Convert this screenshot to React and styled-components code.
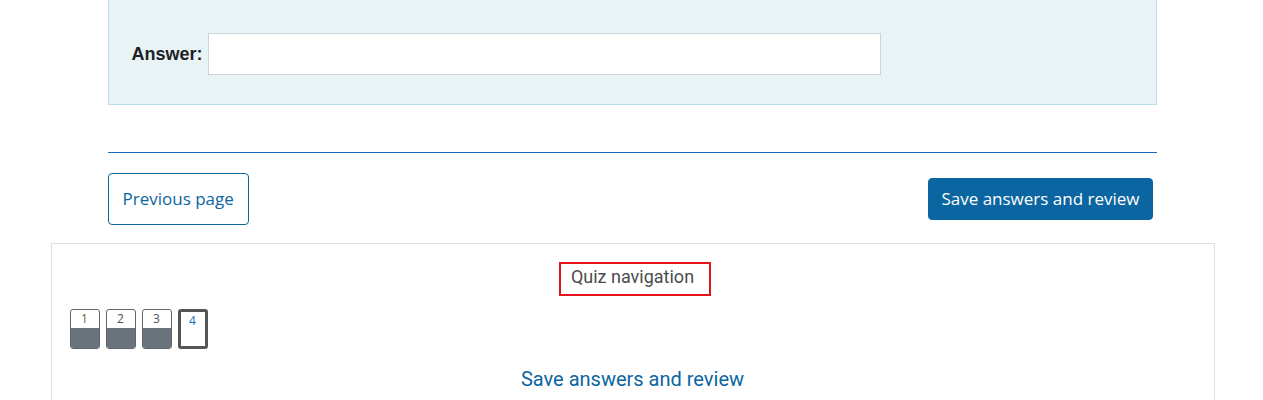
import React from 'react'
import styled, { createGlobalStyle } from 'styled-components'

const GlobalStyle = createGlobalStyle`
  body {
    margin: 0;
    background: #fff;
    font-family: Roboto, "Liberation Sans", sans-serif;
  }
`

const pages = [
  { num: 1, color: '#7a6337', answered: true },
  { num: 2, color: '#495057', answered: true },
  { num: 3, color: '#495057', answered: true },
  { num: 4, color: '#0f6cbf', current: true },
]

const App = () => {
  return (
    <Page>
      <GlobalStyle />
      <Main>
        <Formulation>
          <Label>Answer:</Label>
          <Input type="text" />
        </Formulation>
        <Divider />
        <Buttons>
          <OutlineBtn>Previous page</OutlineBtn>
          <PrimaryBtn>Save answers and review</PrimaryBtn>
        </Buttons>
      </Main>
      <NavBlock>
        <NavTitle>
          <Highlight>Quiz navigation</Highlight>
        </NavTitle>
        <NavButtons>
          {pages.map((p) => (
            <QnButton key={p.num} current={p.current} answered={p.answered}>
              <QnNum color={p.color}>{p.num}</QnNum>
              <QnState answered={p.answered} />
            </QnButton>
          ))}
        </NavButtons>
        <EndLink href="#">Save answers and review</EndLink>
      </NavBlock>
    </Page>
  )
}
export default App

const Page = styled.div`
  display: flex;
  flex-direction: column;
  align-items: center;
  width: 1263px;
`
const Main = styled.div`
  width: 1049px;
  margin-left: 1px;
`
const Formulation = styled.div`
  display: flex;
  align-items: center;
  background: #e7f3f5;
  border: 1px solid #b8dfe7;
  border-top: 0;
  padding: 33px 22px 29px 23px;
`
const Label = styled.label`
  font-family: "Liberation Sans", Arial, sans-serif;
  font-weight: 700;
  font-size: 18px;
  color: #1d2125;
  margin-right: 5px;
`
const Input = styled.input`
  width: 673px;
  height: 42px;
  box-sizing: border-box;
  border: 1px solid #ced4da;
  background: #fff;
  outline: none;
`
const Divider = styled.div`
  height: 1px;
  background: #0f6cbf;
  margin-top: 47px;
`
const Buttons = styled.div`
  display: flex;
  justify-content: space-between;
  align-items: center;
  margin-top: 20px;
  padding-right: 4px;
`
const OutlineBtn = styled.button`
  height: 52px;
  padding: 0 14px 2px;
  background: #fff;
  border: 1px solid #0b65a0;
  border-radius: 4px;
  color: #0b65a0;
  font-family: "Open Sans", sans-serif;
  font-size: 17px;
`
const PrimaryBtn = styled.button`
  height: 42px;
  padding: 0 12px 2px;
  background: #0b65a0;
  border: 1px solid #0b65a0;
  border-radius: 4px;
  color: #fff;
  font-family: "Open Sans", sans-serif;
  font-size: 17px;
`
const NavBlock = styled.div`
  width: 1164px;
  box-sizing: border-box;
  margin-top: 18px;
  margin-left: 2px;
  border: 1px solid #dee2e6;
  border-bottom: 0;
  padding: 18px 18px 0;
  display: flex;
  flex-direction: column;
  height: 160px;
`
const NavTitle = styled.div`
  display: flex;
  justify-content: center;
`
const Highlight = styled.h5`
  margin: 0 0 0 5px;
  border: 2px solid #e3141b;
  padding: 3px 15px 8px 10px;
  font-family: Roboto, sans-serif;
  font-weight: 400;
  font-size: 18px;
  line-height: 19px;
  color: #4c4c4c;
`
const NavButtons = styled.div`
  display: flex;
  gap: 6px;
  margin-top: 13px;
`
const QnButton = styled.div`
  width: 30px;
  height: 40px;
  box-sizing: border-box;
  border: ${({ current }) => (current ? '3px solid #555' : '1px solid #5f666d')};
  border-radius: 3px;
  background: #fff;
  display: flex;
  flex-direction: column;
  overflow: hidden;
`
const QnNum = styled.span`
  height: 18px;
  line-height: 18px;
  text-align: center;
  font-family: "Open Sans", sans-serif;
  font-size: 12px;
  color: ${({ color }) => color};
`
const QnState = styled.span`
  flex: 1;
  background: ${({ answered }) => (answered ? '#6a737b' : 'transparent')};
`
const EndLink = styled.a`
  align-self: center;
  margin-top: 18px;
  font-family: Roboto, sans-serif;
  font-size: 20px;
  color: #0b65a0;
  text-decoration: none;
`
